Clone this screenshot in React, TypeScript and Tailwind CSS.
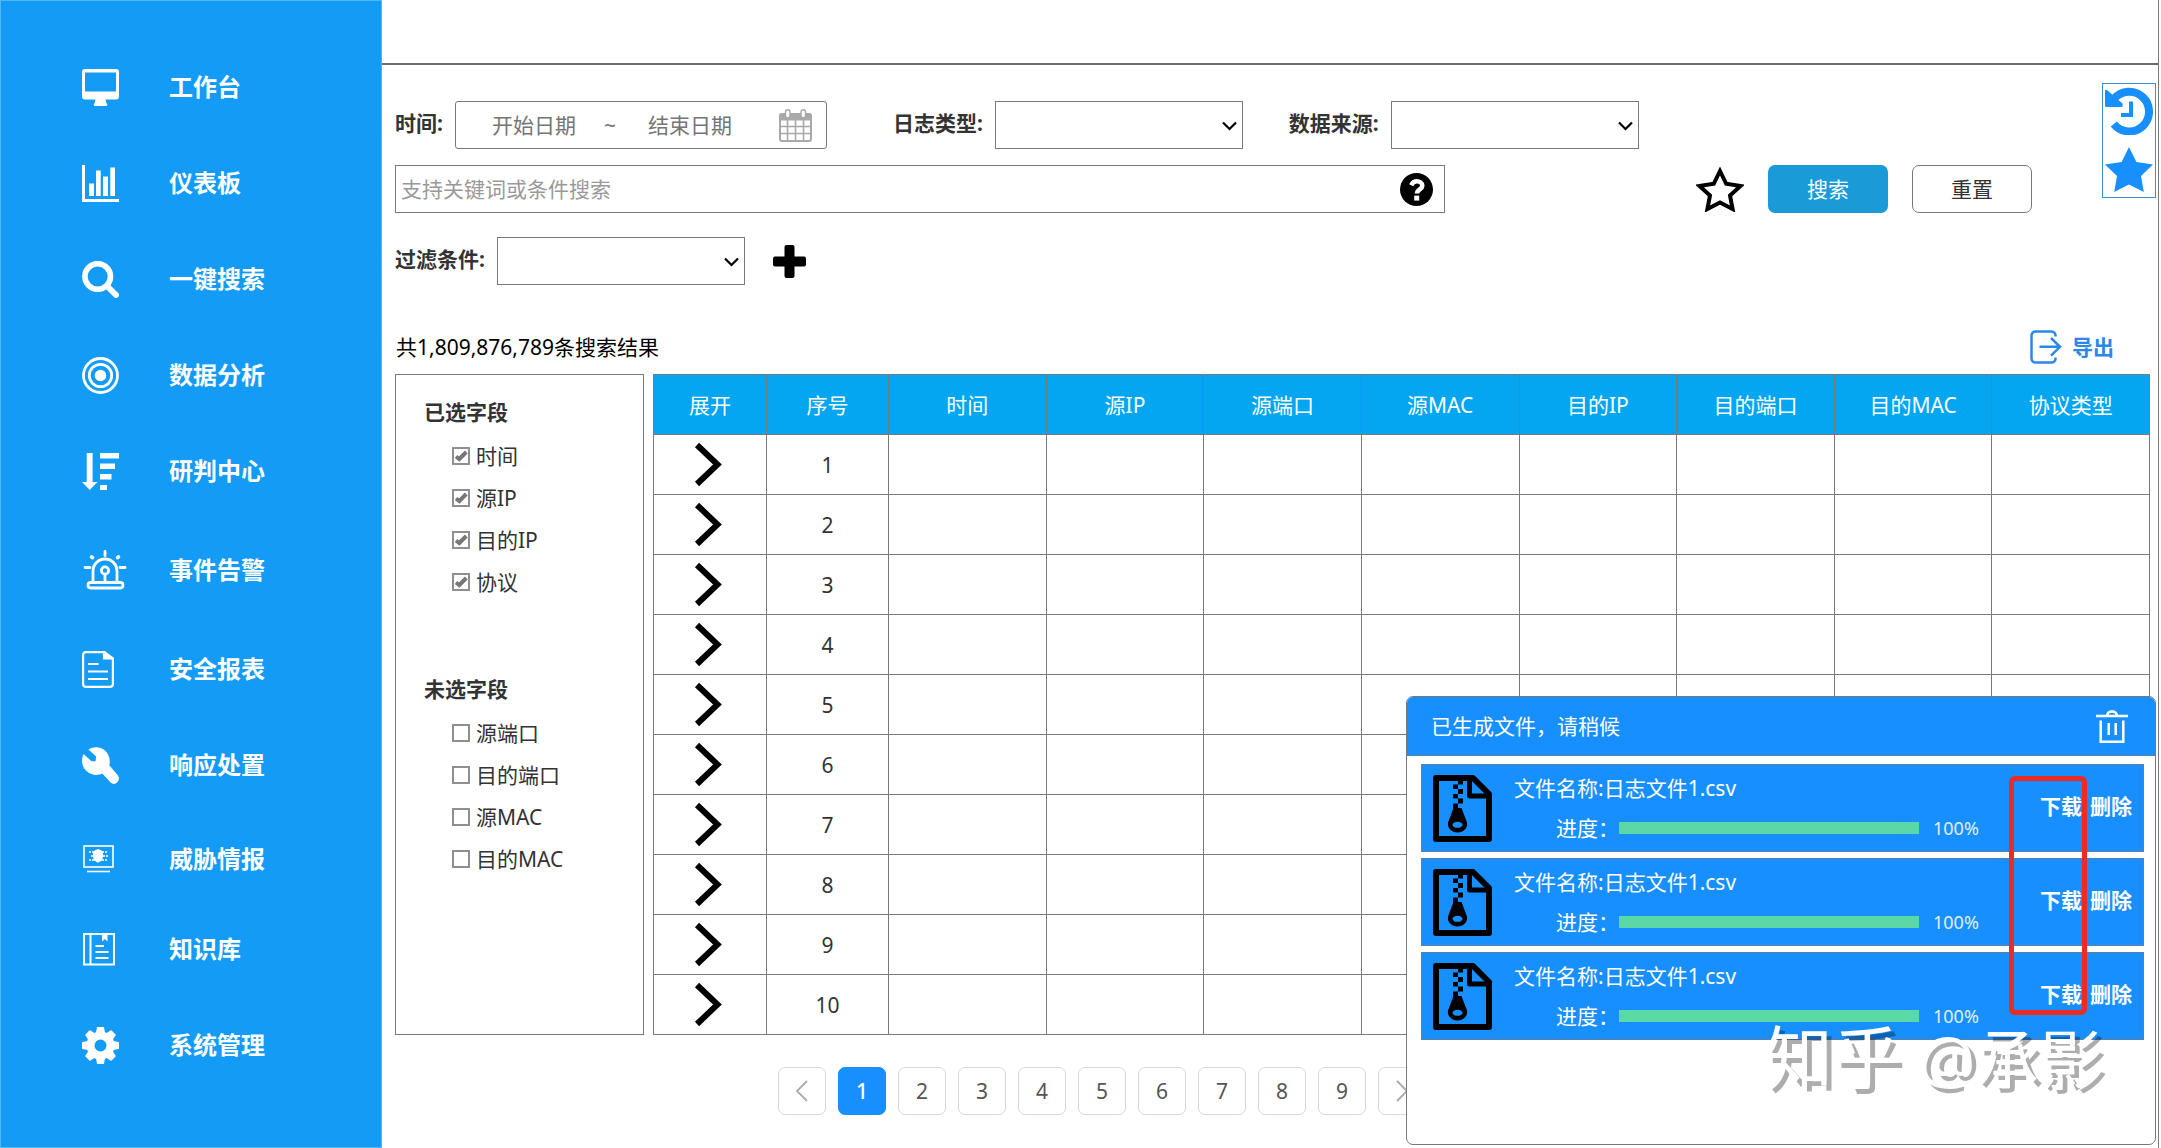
import React, { useState } from "react";

const STAR =
  "M24 0 L31.4 15 L48 17.4 L36 29 L38.8 45 L24 37.6 L9.2 45 L12 29 L0 17.4 L16.6 15 Z";

function MonitorIcon() {
  return (
    <svg width="37" height="37" viewBox="0 0 37 37" fill="currentColor" aria-hidden="true">
      <path
        fillRule="evenodd"
        d="M3 0H34A3 3 0 0 1 37 3V27.500A3 3 0 0 1 34 30.500H23.500L24.500 34.500A1.300 1.300 0 0 1 24 37H13A1.300 1.300 0 0 1 12.500 34.500L13.500 30.500H3A3 3 0 0 1 0 27.500V3A3 3 0 0 1 3 0ZM3 3.500V22.500H34V3.500Z"
      />
    </svg>
  );
}

function ChartIcon() {
  return (
    <svg width="37" height="37" viewBox="0 0 37 37" fill="currentColor" aria-hidden="true">
      <path d="M0 0H3V34H37V37H0Z M7 18.500H12V31H7Z M14 5.500H18.700V31H14Z M21 11.500H26V31H21Z M28.300 2.500H33V31H28.300Z" />
    </svg>
  );
}

function SearchIcon() {
  return (
    <svg width="37" height="37" viewBox="0 0 37 37" fill="none" stroke="currentColor" aria-hidden="true">
      <circle cx="15.700" cy="15.500" r="12.800" strokeWidth="5.600" />
      <path d="M25 25L34 34" strokeWidth="6" strokeLinecap="round" />
    </svg>
  );
}

function TargetIcon() {
  return (
    <svg width="37" height="37" viewBox="0 0 37 37" fill="none" stroke="currentColor" strokeWidth="2.800" aria-hidden="true">
      <circle cx="18.500" cy="18.500" r="17" />
      <circle cx="18.500" cy="18.500" r="11.200" />
      <circle cx="18.500" cy="18.500" r="5.800" fill="currentColor" stroke="none" />
    </svg>
  );
}

function SortIcon() {
  return (
    <svg width="37" height="37" viewBox="0 0 37 37" fill="currentColor" aria-hidden="true">
      <path d="M4.700 0H10.600V29H15.500L7.700 37L0 29H4.700Z M18 0H37V5.500H18Z M18 10.500H33V16H18Z M18 21H29.500V26.500H18Z M18 32H25V37H18Z" />
    </svg>
  );
}

function AlarmIcon() {
  return (
    <svg width="45" height="40" viewBox="-1 0 45 40" fill="none" stroke="currentColor" strokeWidth="2.800" strokeLinecap="round" aria-hidden="true">
      <path d="M10 32V21A12 12 0 0 1 34 21V32" />
      <rect x="5" y="32.500" width="35" height="5.500" rx="2.700" />
      <circle cx="22" cy="20.500" r="3.600" />
      <path d="M22 24.500V31M22 1.500V5.500M2 17.500H7M37 17.500H42" />
      <path d="M8.500 6.800L9.500 7.600M35.500 6.800L34.500 7.600" strokeWidth="3.600" />
    </svg>
  );
}

function ReportIcon() {
  return (
    <svg width="32" height="37" viewBox="0 0 32 37" fill="none" stroke="currentColor" strokeWidth="2.200" aria-hidden="true">
      <path d="M22.500 1.100H4A3 3 0 0 0 1.100 4V33A3 3 0 0 0 4 35.900H28A3 3 0 0 0 30.900 33V8.500Z" />
      <path d="M22 1V7.500H31Z" fill="currentColor" />
      <path d="M6 13H16.500M6 20.500H26M6 28H26" strokeWidth="2" />
    </svg>
  );
}

function WrenchIcon() {
  return (
    <svg width="37" height="37" viewBox="0 0 37 37" fill="currentColor" aria-hidden="true">
      <path d="M6.500 2.500C11 -0.500 18 -0.800 23 3.500C27 7.200 28.700 12.500 27.300 18.200L36 28.500C37.500 30.500 37.200 33.500 35.300 35.300C33.300 37.200 30.800 37.400 28.800 35.800L20.500 26.800C14.500 29 8.500 28 4 23.500C0 19.500 -1.200 13.500 1.500 7L9.500 14.200H13.500L14.200 9.500Z" />
    </svg>
  );
}

function ThreatIcon() {
  return (
    <svg width="33" height="28" viewBox="-1 0 33 28" fill="none" stroke="currentColor" strokeWidth="1.600" aria-hidden="true">
      <rect x="1" y="1" width="29" height="21" />
      <path d="M4 26.500H27" />
      <path d="M15 4L20 6.200V11.500C20 14.500 17.500 16.500 15 17.800C12.500 16.500 10 14.500 10 11.500V6.200Z" fill="currentColor" stroke="none" />
      <path d="M6 7H8M9 7H21M22 7H24M8 11H22M6 15H8M9 15H21M22 15H24M23 11H25" strokeWidth="1.300" />
    </svg>
  );
}

function BookIcon() {
  return (
    <svg width="33" height="33" viewBox="-1 0 33 33" fill="none" stroke="currentColor" strokeWidth="2" aria-hidden="true">
      <path d="M1 1H31V31.500H1ZM7.500 1V31.500" />
      <path d="M19 1H24.500V8.500L21.800 6L19 8.500Z" fill="currentColor" stroke="none" />
      <path d="M12.500 13H21M12.500 19H25.500M12.500 25H25.500" />
    </svg>
  );
}

function GearIcon() {
  return (
    <svg width="37" height="37" viewBox="0 0 37 37" aria-hidden="true">
      <circle cx="18.500" cy="18.500" r="10" fill="none" stroke="currentColor" strokeWidth="8" />
      {[0, 45, 90, 135, 180, 225, 270, 315].map((a) => (
        <path
          key={a}
          d="M15 0.500Q15.200 0 15.700 0H21.300Q21.800 0 22 0.500L23.300 7H13.700Z"
          fill="currentColor"
          transform={`rotate(${a} 18.5 18.5)`}
        />
      ))}
    </svg>
  );
}

function CalendarIcon() {
  return (
    <svg width="33" height="33" viewBox="0 0 33 33" fill="none" stroke="#a9a9a9" aria-hidden="true">
      <rect x="1" y="5" width="31" height="27" rx="2" strokeWidth="2" />
      <path d="M1 5H32V11H1Z" fill="#a9a9a9" />
      <path d="M8.500 11V32M16.500 11V32M24.500 11V32M1 17.500H32M1 24.500H32" strokeWidth="1.600" />
      <rect x="6.500" y="0.700" width="4.500" height="8" rx="2.200" fill="#fff" strokeWidth="1.400" />
      <rect x="22" y="0.700" width="4.500" height="8" rx="2.200" fill="#fff" strokeWidth="1.400" />
    </svg>
  );
}

function HelpIcon() {
  return (
    <svg width="33" height="33" viewBox="0 0 33 33" aria-hidden="true">
      <circle cx="16.500" cy="16.500" r="16.500" fill="#000" />
      <path
        d="M11.200 12.200C12.500 9.500 14.200 8.300 16.800 8.300C19.800 8.300 22.300 10.300 22.300 12.800C22.300 16.500 17 16.300 17 20.600"
        fill="none"
        stroke="#fff"
        strokeWidth="4.600"
      />
      <rect x="14.200" y="22.600" width="5" height="5" fill="#fff" />
    </svg>
  );
}

function HistoryIcon() {
  return (
    <svg width="48" height="48" viewBox="0 0 48 48" fill="none" stroke="currentColor" aria-hidden="true">
      <path d="M9 12A19.800 19.800 0 1 1 8.800 37" strokeWidth="8" />
      <path d="M0 4Q0 2 2 3L17.500 16.500Q18.500 20 16 20H1.500Q0 20 0 18.500Z" fill="currentColor" stroke="none" />
      <path d="M26 14.500V28H16" strokeWidth="4" />
    </svg>
  );
}

function ExportIcon() {
  return (
    <svg width="32" height="34" viewBox="0 0 32 34" fill="none" stroke="currentColor" strokeWidth="2.500" aria-hidden="true">
      <path d="M25.500 6.500V5.500A4 4 0 0 0 21.500 1.500H5.500A4 4 0 0 0 1.500 5.500V28.500A4 4 0 0 0 5.500 32.500H21.500A4 4 0 0 0 25.500 28.500V27.500" />
      <path d="M9.500 16.800H30M21 8L30 16.800L21 25.600" />
    </svg>
  );
}

function TrashIcon() {
  return (
    <svg width="32" height="33" viewBox="0 0 32 33" fill="none" stroke="currentColor" strokeWidth="2.500" aria-hidden="true">
      <path d="M0 6H32M11 6C11.500 0 20.500 0 21 6M4.700 10.500V31.700H27.300V10.500M12.700 13V25M19.700 13V25" />
    </svg>
  );
}

function ZipFileIcon() {
  return (
    <svg width="59" height="67" viewBox="0 0 59 67" aria-hidden="true">
      <g fill="none" stroke="#000" strokeWidth="6" strokeLinejoin="round">
        <path d="M3 3H40L56 19V64H3Z" />
        <path d="M36.500 3V21H56" strokeWidth="5" />
      </g>
      <path d="M25 5H30V9.500H25Z M20 9.500H25V14H20Z M25 14H30V19H25Z M20 19H25V23.500H20Z M25 23.500H30V28.500H25Z M20 28.500H25V34H20Z" />
      <path
        fillRule="evenodd"
        d="M20.500 33H28.500L34 47.500C35 53 30.500 57.500 24.500 57.500C18.500 57.500 14 53 15 47.500ZM24.500 46.800A5 3 0 1 0 24.500 52.800A5 3 0 1 0 24.500 46.800Z"
      />
    </svg>
  );
}

function RowChevron() {
  return (
    <svg width="28" height="45" viewBox="0 0 28 45" fill="none" stroke="#000" strokeWidth="6" aria-hidden="true">
      <path d="M3 3L23.500 22.500L3 42" />
    </svg>
  );
}

const NAV = [
  { label: "工作台", icon: MonitorIcon, height: "h-24" },
  { label: "仪表板", icon: ChartIcon, height: "h-24" },
  { label: "一键搜索", icon: SearchIcon, height: "h-24" },
  { label: "数据分析", icon: TargetIcon, height: "h-24" },
  { label: "研判中心", icon: SortIcon, height: "h-24" },
  { label: "事件告警", icon: AlarmIcon, height: "h-[102px]" },
  { label: "安全报表", icon: ReportIcon, height: "h-24" },
  { label: "响应处置", icon: WrenchIcon, height: "h-24" },
  { label: "威胁情报", icon: ThreatIcon, height: "h-23" },
  { label: "知识库", icon: BookIcon, height: "h-22" },
  { label: "系统管理", icon: GearIcon, height: "h-26" },
];

const COLUMNS = ["时间", "源IP", "源端口", "源MAC", "目的IP", "目的端口", "目的MAC", "协议类型"];
const ROWS = [1, 2, 3, 4, 5, 6, 7, 8, 9, 10];
const PAGES = [1, 2, 3, 4, 5, 6, 7, 8, 9];

function Sidebar() {
  return (
    <nav className="w-[382px] shrink-0 border border-[#4fb9f8] bg-[#149bf5] pt-[38px] text-white">
      {NAV.map(({ label, icon: Icon, height }) => (
        <a key={label} href="#" className={`flex items-center pl-[81px] ${height}`}>
          <span className="w-[87px]">
            <Icon />
          </span>
          <span className="text-2xl font-bold">{label}</span>
        </a>
      ))}
    </nav>
  );
}

function SelectField({ id, label }: { id: string; label: string }) {
  return (
    <div className="flex items-center gap-3">
      <label htmlFor={id} className="pb-1 font-bold">
        {label}
      </label>
      <div className="relative">
        <select id={id} className="block h-12 w-[248px] appearance-none border border-[#797979] bg-white px-2">
          <option value=""></option>
        </select>
        <svg
          className="pointer-events-none absolute top-5 right-1.5"
          width="15"
          height="10"
          viewBox="0 0 15 10"
          fill="none"
          stroke="#000"
          strokeWidth="2.200"
          aria-hidden="true"
        >
          <path d="M1 1.500L7.500 8L14 1.500" />
        </svg>
      </div>
    </div>
  );
}

function Filters() {
  return (
    <form className="flex flex-col" onSubmit={(e) => e.preventDefault()}>
      <div className="flex items-center">
        <div className="flex items-center gap-3">
          <label htmlFor="start-date" className="pb-1 font-bold">
            时间:
          </label>
          <div className="flex h-12 w-[372px] items-center rounded-[3px] border border-[#797979] pr-3.5 pl-9">
            <input
              id="start-date"
              placeholder="开始日期"
              className="w-28 outline-none placeholder:text-[#757575]"
            />
            <span className="w-11 text-[#757575]">~</span>
            <input
              aria-label="结束日期"
              placeholder="结束日期"
              className="w-28 outline-none placeholder:text-[#757575]"
            />
            <button type="button" aria-label="选择日期" className="ml-auto">
              <CalendarIcon />
            </button>
          </div>
        </div>
        <div className="ml-[66px]">
          <SelectField id="log-type" label="日志类型:" />
        </div>
        <div className="ml-[46px]">
          <SelectField id="data-source" label="数据来源:" />
        </div>
      </div>

      <div className="mt-4 flex items-center justify-between pr-[118px]">
        <div className="flex h-12 w-[1050px] items-center border border-[#797979] pr-[11px] pl-[5px]">
          <input
            aria-label="搜索条件"
            placeholder="支持关键词或条件搜索"
            className="min-w-0 flex-1 outline-none placeholder:text-[#999999]"
          />
          <button type="button" aria-label="帮助">
            <HelpIcon />
          </button>
        </div>
        <div className="flex items-center gap-6">
          <button type="button" aria-label="收藏">
            <svg width="48" height="45" viewBox="0 0 48 45" fill="none" stroke="#000" strokeWidth="4" aria-hidden="true">
              <path d="M24 4L30.200 16.800L44.500 18.900L34 28.500L36.600 42L24 35.500L11.400 42L14 28.500L3.500 18.900L17.800 16.800Z" />
            </svg>
          </button>
          <button type="submit" className="h-12 w-[120px] rounded-[7px] bg-[#1a9bd7] text-white">
            搜索
          </button>
          <button type="reset" className="h-12 w-[120px] rounded-[7px] border border-[#797979]">
            重置
          </button>
        </div>
      </div>

      <div className="mt-6 flex items-center gap-7">
        <SelectField id="filter" label="过滤条件:" />
        <button type="button" aria-label="添加条件">
          <svg width="33" height="33" viewBox="0 0 33 33" aria-hidden="true">
            <rect x="11.500" y="0" width="10" height="33" rx="2" />
            <rect x="0" y="11.500" width="33" height="10" rx="2" />
          </svg>
        </button>
      </div>
    </form>
  );
}

function FieldGroup({ title, fields, selected }: { title: string; fields: string[]; selected: boolean }) {
  return (
    <fieldset>
      <legend className="mb-0.5 text-[21px] leading-[42px] font-bold">{title}</legend>
      {fields.map((f) => (
        <label key={f} className="flex h-[42px] items-center gap-1.5 pl-7">
          <span className="relative">
            <input
              type="checkbox"
              defaultChecked={selected}
              className="peer block size-[18px] appearance-none border-2 border-[#8f8f8f] bg-white"
            />
            <svg
              className="pointer-events-none absolute inset-0 hidden peer-checked:block"
              width="18"
              height="18"
              viewBox="0 0 18 18"
              fill="none"
              stroke="#777"
              strokeWidth="4"
              aria-hidden="true"
            >
              <path d="M4 9.500L7.300 12L14.300 5" />
            </svg>
          </span>
          {f}
        </label>
      ))}
    </fieldset>
  );
}

function ResultTable() {
  return (
    <div className="min-w-0 flex-1">
      <table className="w-full table-fixed border-collapse text-center [&_td]:border [&_td]:border-[#797979] [&_th]:border [&_th]:border-[#797979]">
        <thead className="bg-[#04a6f2] text-white">
          <tr className="h-[60px]">
            <th className="w-[113px] font-normal">展开</th>
            <th className="w-[122px] font-normal">序号</th>
            {COLUMNS.map((c) => (
              <th key={c} className="font-normal">
                {c}
              </th>
            ))}
          </tr>
        </thead>
        <tbody>
          {ROWS.map((n) => (
            <tr key={n} className="h-[60px]">
              <td>
                <button type="button" aria-label={`展开第${n}行`} className="block w-full pr-1">
                  <span className="flex justify-center">
                    <RowChevron />
                  </span>
                </button>
              </td>
              <td>{n}</td>
              {COLUMNS.map((c) => (
                <td key={c}></td>
              ))}
            </tr>
          ))}
        </tbody>
      </table>
    </div>
  );
}

function Pagination() {
  const [page, setPage] = useState(1);
  const base = "flex size-12 items-center justify-center rounded-[7px] border";
  return (
    <div className="mt-8 flex gap-3 pl-[383px] text-[#555555]">
      <button type="button" aria-label="上一页" className={`${base} border-[#d9d9d9]`}>
        <svg width="12" height="22" viewBox="0 0 12 22" fill="none" stroke="#aaa" strokeWidth="1.800" aria-hidden="true">
          <path d="M11 1L1 11L11 21" />
        </svg>
      </button>
      {PAGES.map((n) => (
        <button
          key={n}
          type="button"
          onClick={() => setPage(n)}
          className={n === page ? `${base} border-[#188fff] bg-[#188fff] font-medium text-white` : `${base} border-[#d9d9d9]`}
        >
          {n}
        </button>
      ))}
      <button type="button" aria-label="下一页" className={`${base} border-[#d9d9d9]`}>
        <svg width="12" height="22" viewBox="0 0 12 22" fill="none" stroke="#aaa" strokeWidth="1.800" aria-hidden="true">
          <path d="M1 1L11 11L1 21" />
        </svg>
      </button>
    </div>
  );
}

function DownloadItem() {
  return (
    <li className="flex h-[88px] items-center border border-[#5f7fa5] bg-[#188fff] pr-[11px] pl-[11px]">
      <ZipFileIcon />
      <div className="ml-[22px] flex flex-col gap-2">
        <span className="leading-8">文件名称:日志文件1.csv</span>
        <div className="flex h-8 items-center pl-[42px]">
          <span>进度：</span>
          <div className="h-3 w-[300px] bg-[#5ad8a6]" role="progressbar" aria-valuenow={100} aria-label="进度" />
          <span className="ml-3.5 text-lg leading-6 text-white/85">100%</span>
        </div>
      </div>
      <div className="ml-auto flex gap-2 pb-1 font-bold">
        <button type="button">下载</button>
        <button type="button">删除</button>
      </div>
    </li>
  );
}

function DownloadPanel() {
  return (
    <section className="absolute right-[5px] bottom-[3px] h-[449px] w-[750px] overflow-hidden rounded-[7px] border border-[#797979] bg-white text-white">
      <header className="flex h-[59px] items-center justify-between border-b border-[#5f7fa5] bg-[#188fff] pr-[27px] pl-6">
        <h2>已生成文件，请稍候</h2>
        <button type="button" aria-label="清空">
          <TrashIcon />
        </button>
      </header>
      <ul className="mt-2 flex flex-col gap-1.5 pr-[11px] pl-3.5">
        <DownloadItem />
        <DownloadItem />
        <DownloadItem />
      </ul>
      <div className="pointer-events-none absolute top-[79px] right-[68px] h-[239px] w-[78px] rounded-md border-5 border-[#ee2a22]" />
      <p className="pointer-events-none absolute top-[328px] right-[52px] text-[64px] leading-16 whitespace-pre [text-shadow:5px_5px_0_rgba(0,0,0,0.32)]">
        <span className="text-[68px]">知乎</span> @承影
      </p>
    </section>
  );
}

export default function App() {
  return (
    <div className="relative flex min-h-screen bg-white pr-0.5 font-['Noto_Sans','Noto_Sans_CJK_SC',sans-serif] text-[21px] leading-8 text-[#333333]">
      <Sidebar />
      <main className="min-w-0 flex-1 border-r border-[#797979]">
        <div className="h-[65px] border-b-2 border-[#6b6b6b]" />
        <div className="pt-9 pr-2 pl-[13px]">
          <Filters />
          <div className="mt-[45px] mb-2.5 flex h-[34px] items-center justify-between pr-9 pl-px text-black">
            <p>共1,809,876,789条搜索结果</p>
            <button type="button" className="flex items-center gap-2.5 font-bold text-[#2b87e8]">
              <ExportIcon />
              导出
            </button>
          </div>
          <div className="flex items-stretch gap-[9px]">
            <aside className="flex w-[249px] shrink-0 flex-col gap-[65px] border border-[#797979] pt-4 pl-7">
              <FieldGroup title="已选字段" fields={["时间", "源IP", "目的IP", "协议"]} selected />
              <FieldGroup title="未选字段" fields={["源端口", "目的端口", "源MAC", "目的MAC"]} selected={false} />
            </aside>
            <ResultTable />
          </div>
          <Pagination />
        </div>
      </main>
      <div className="absolute top-[83px] right-[5px] flex h-[115px] w-[54px] flex-col items-center gap-3 border border-[#3b8fd6] bg-white pt-[3px] text-[#188fff]">
        <button type="button" aria-label="历史记录">
          <HistoryIcon />
        </button>
        <button type="button" aria-label="我的收藏">
          <svg width="48" height="45" viewBox="0 0 48 45" fill="currentColor" aria-hidden="true">
            <path d={STAR} />
          </svg>
        </button>
      </div>
      <DownloadPanel />
    </div>
  );
}
